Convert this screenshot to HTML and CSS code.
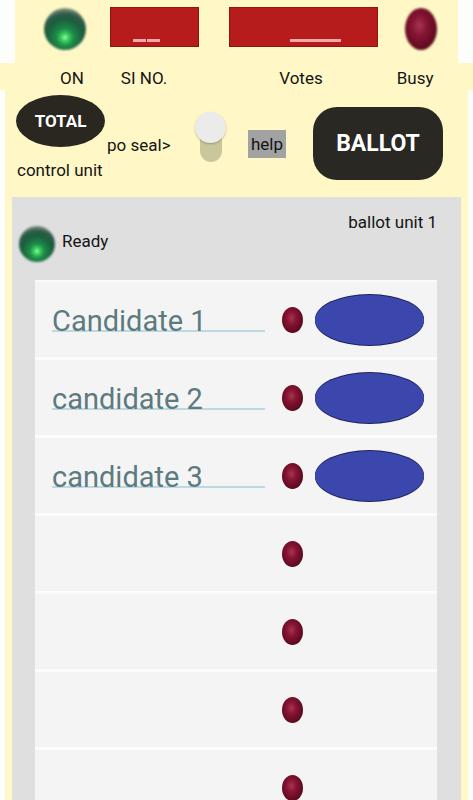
FILE: index.html
```html
<!DOCTYPE html>
<html>
<head>
<meta charset="utf-8">
<link rel="stylesheet" href="styles.css">
</head>
<body>
<div class="top">
  <div class="led-green led-on"></div>
  <div class="display sino"><span class="dash d1"></span><span class="dash d2"></span></div>
  <div class="display votes"><span class="dash d3"></span></div>
  <div class="led-red busy"></div>
</div>
<div class="labels">
  <span class="lb-on">ON</span>
  <span class="lb-sino">SI NO.</span>
  <span class="lb-votes">Votes</span>
  <span class="lb-busy">Busy</span>
</div>
<div class="main">
  <div class="controls">
    <div class="left">
      <div class="left-row">
        <div class="total">TOTAL</div>
        <span class="poseal">po seal&gt;</span>
      </div>
      <div class="cu">control unit</div>
    </div>
    <div class="switch"><div class="track"></div><div class="thumb"></div></div>
    <div class="help">help</div>
    <div class="ballot">BALLOT</div>
  </div>
  <div class="unit">
    <div class="unit-head">
      <div class="ready"><div class="led-green led-ready"></div><span>Ready</span></div>
      <div class="unit-title">ballot unit 1</div>
    </div>
    <div class="rows">
      <div class="row"><div class="field">Candidate 1</div><div class="led-red small"></div><div class="vote"></div></div>
      <div class="row"><div class="field">candidate 2</div><div class="led-red small"></div><div class="vote"></div></div>
      <div class="row"><div class="field">candidate 3</div><div class="led-red small"></div><div class="vote"></div></div>
      <div class="row"><div class="field empty"></div><div class="led-red small"></div></div>
      <div class="row"><div class="field empty"></div><div class="led-red small"></div></div>
      <div class="row"><div class="field empty"></div><div class="led-red small"></div></div>
      <div class="row"><div class="field empty"></div><div class="led-red small"></div></div>
    </div>
  </div>
</div>
</body>
</html>
```
FILE: styles.css
```css
html, body { margin: 0; padding: 0; background: #fdfdfb; }
body { font-family: Roboto, "Noto Sans", sans-serif; color: #141414; width: 473px; overflow: hidden; height: 800px; }

.top {
  margin: 0 15px;
  height: 63px;
  background: #fff8c6;
  display: flex;
  align-items: flex-start;
}
.led-green {
  border-radius: 50%;
  background: radial-gradient(circle at 50% 70%, #c8ffd0 0%, #3fdc62 8%, #1e8a48 24%, #1a5e3e 50%, #2f5a48 66%, rgba(110,130,115,0.75) 82%, rgba(220,220,200,0) 100%);
  filter: blur(1px);
}
.led-on { width: 42px; height: 42px; margin: 8px 0 0 29px; }
.display {
  background: #b61c1c;
  border: 1px solid #8f1414;
  box-sizing: border-box;
  height: 40px;
  margin-top: 7px;
  display: flex;
  align-items: flex-start;
  padding-top: 31px;
}
.sino { width: 89px; margin-left: 24px; padding-left: 22px; }
.votes { width: 149px; margin-left: 30px; padding-left: 60px; }
.dash { display: block; height: 3px; background: #f6a7a7; }
.d1 { width: 13px; }
.d2 { width: 13px; margin-left: 1px; }
.d3 { width: 51px; }
.led-red {
  border-radius: 50%;
  background: radial-gradient(ellipse at 45% 42%, #a83450 0%, #861432 30%, #650c22 62%, #4a0a16 80%, rgba(190,160,140,0.55) 100%);
}
.busy { width: 32px; height: 42px; margin: 8px 0 0 27px; filter: blur(0.8px); }

.labels {
  height: 27px;
  background: #fff8c6;
  display: flex;
  align-items: center;
  font-size: 17px;
  line-height: 20px;
  padding-top: 2px;
  box-sizing: border-box;
}
.lb-on { margin-left: 60px; }
.lb-sino { margin-left: 37px; }
.lb-votes { margin-left: 112px; }
.lb-busy { margin-left: 74px; }

.main {
  margin: 0 5px;
  padding: 0 7px;
  background: #fff8c6;
}
.controls {
  height: 107px;
  display: flex;
  align-items: flex-start;
}
.left { width: 175px; padding: 5px 0 0 4px; box-sizing: border-box; }
.left-row { display: flex; align-items: flex-start; }
.total {
  width: 89px;
  height: 52px;
  border-radius: 50%;
  background: #2a2620;
  color: #fff;
  font-weight: 700;
  font-size: 17px;
  display: flex;
  align-items: center;
  justify-content: center;
  padding-bottom: 1px;
  box-sizing: border-box;
}
.poseal { font-size: 17px; line-height: 20px; margin: 40px 0 0 2px; white-space: nowrap; }
.cu { font-size: 17px; line-height: 20px; margin: 5px 0 0 1px; white-space: nowrap; }

.switch { position: relative; width: 31px; height: 50px; margin: 22px 0 0 8px; }
.track { width: 22px; height: 37px; margin: 13px 0 0 5px; border-radius: 11px; background: #cbc79c; }
.thumb {
  position: absolute; left: 0; top: 0;
  width: 31px; height: 31px; border-radius: 50%;
  background: #ebebeb;
  box-shadow: 0 1px 2px rgba(0,0,0,0.25);
}
.help {
  margin: 40px 0 0 22px;
  width: 38px; height: 28px;
  background: #a2a2a2;
  font-size: 17px;
  display: flex; align-items: center; justify-content: center;
}
.ballot {
  margin: 17px 0 0 27px;
  width: 130px; height: 73px;
  border-radius: 24px;
  background: #2a2822;
  color: #fff;
  font-weight: 700;
  font-size: 23px;
  display: flex; align-items: center; justify-content: center;
}

.unit { background: #dfdfdf; min-height: 620px; }
.unit-head { height: 83px; display: flex; justify-content: space-between; align-items: flex-start; }
.ready { display: flex; align-items: center; margin: 29px 0 0 7px; font-size: 17px; }
.led-ready { width: 36px; height: 36px; }
.ready span { margin: -6px 0 0 7px; line-height: 20px; }
.unit-title { font-size: 17px; line-height: 20px; margin: 15px 24px 0 0; }

.rows {
  margin: 0 24px 0 23px;
  background: #fcfcfc;
  padding-top: 2px;
  display: flex;
  flex-direction: column;
  gap: 3px;
}
.row {
  height: 75px;
  background: #f4f4f4;
  display: flex;
  align-items: flex-start;
  flex-shrink: 0;
}
.field {
  width: 213px;
  margin: 31px 0 0 17px;
  font-size: 29px;
  line-height: 17px;
  color: #5c7a80;
  border-bottom: 2px solid #bcd8e0;
  white-space: nowrap;
}
.field.empty { border-bottom-color: transparent; height: 17px; }
.small { width: 21px; height: 26px; margin: 25px 0 0 17px; filter: blur(0.4px); }
.vote {
  width: 109px; height: 50px;
  margin: 13px 0 0 12px;
  border-radius: 50%;
  background: #3c47ad;
  box-shadow: 0 -1px 0 #1c1f5c, 0 1px 0 #1c1f5c;
}
```
